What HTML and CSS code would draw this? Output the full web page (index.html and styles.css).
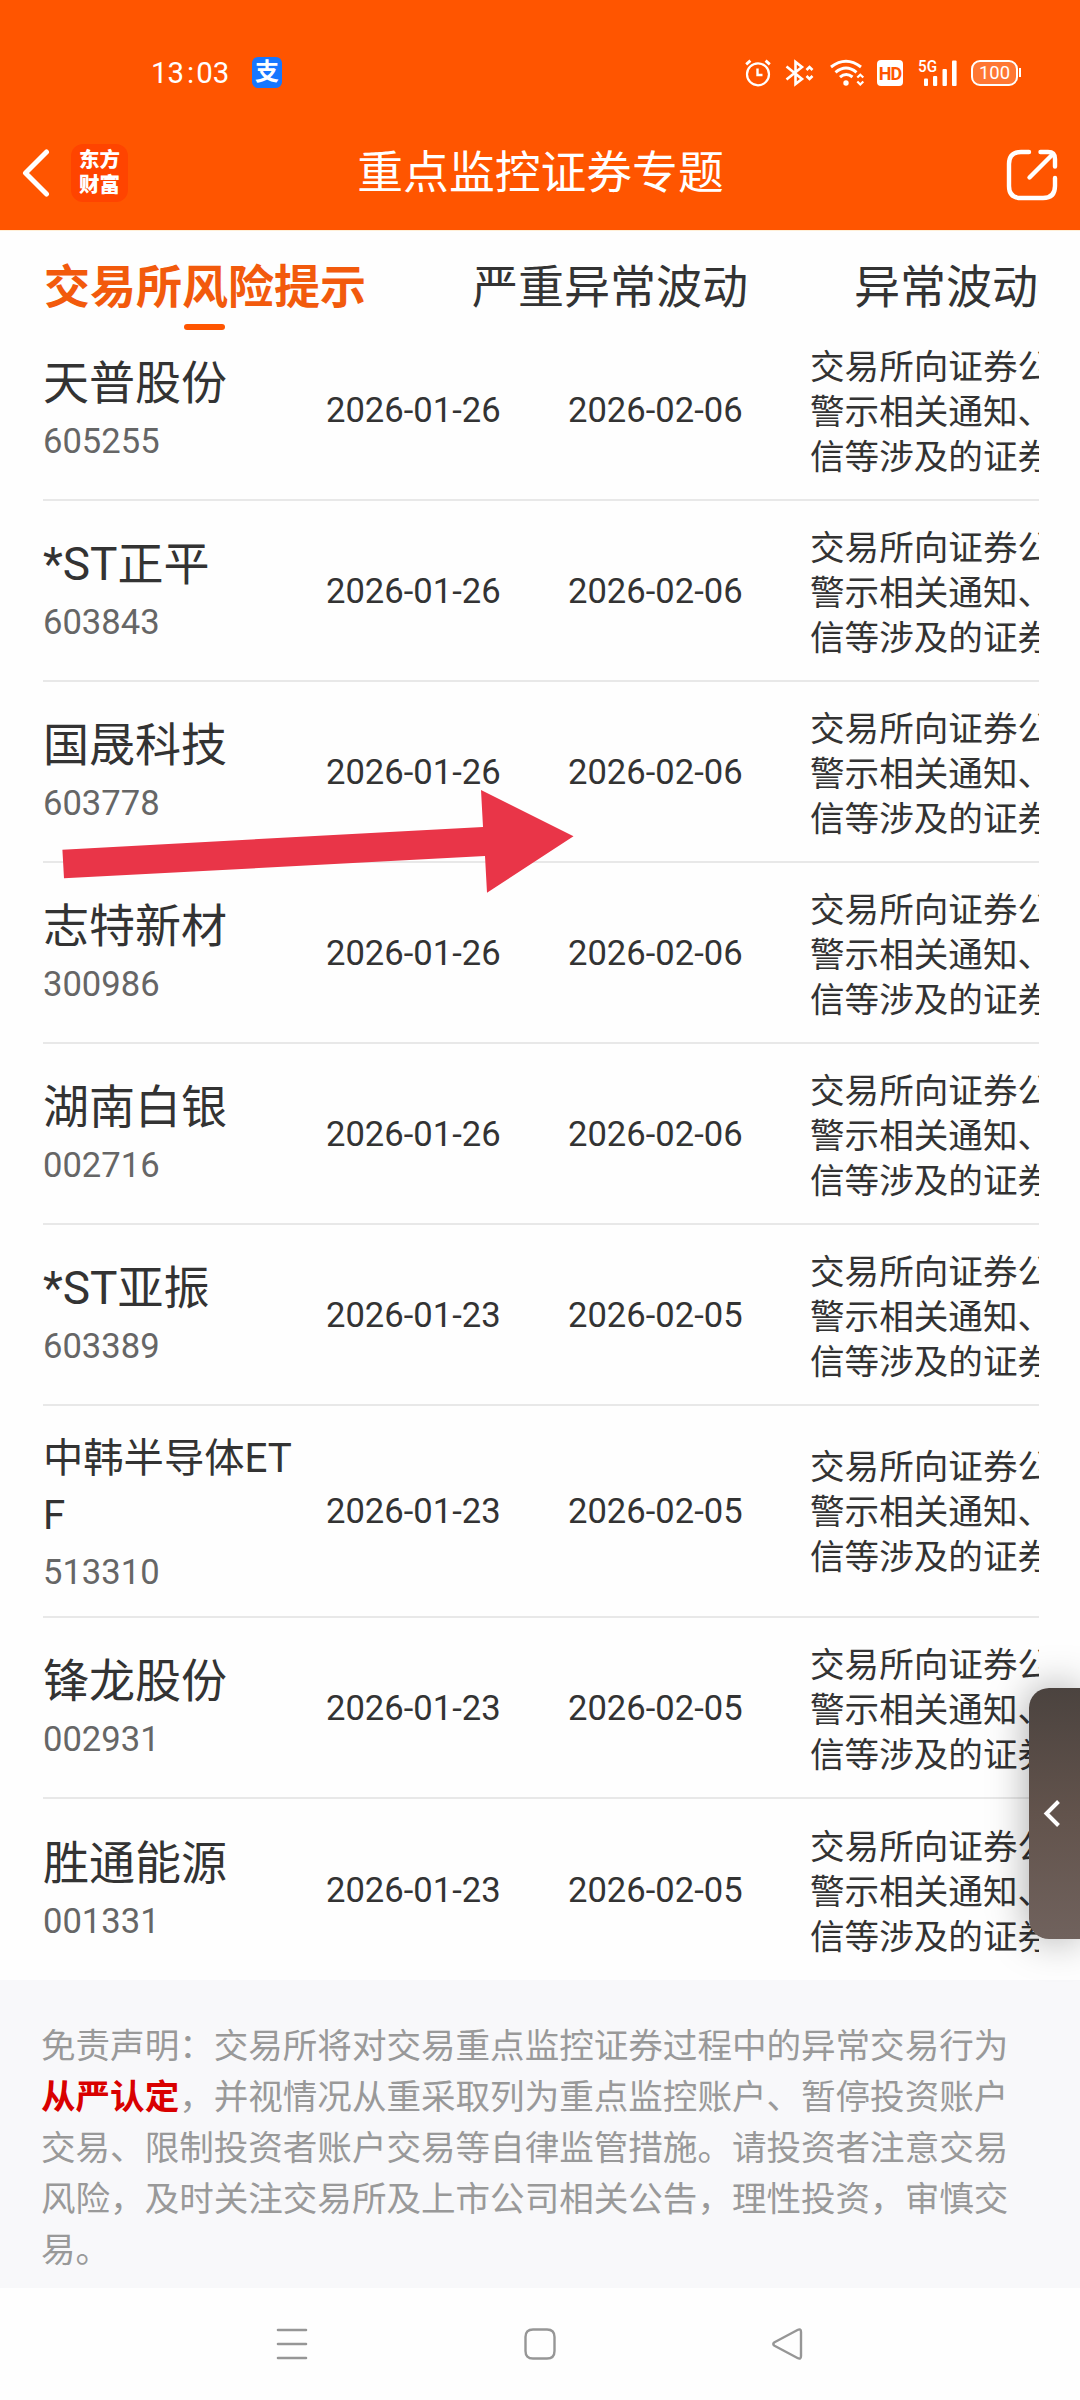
FILE: index.html
```html
<!DOCTYPE html>
<html lang="zh-CN">
<head>
    <meta charset="UTF-8">
    <meta name="viewport" content="width=device-width, initial-scale=1.0">
    <title>重点监控证券专题</title>
    <link rel="stylesheet" href="styles.css">
</head>
<body>
    <header class="top">
        <div class="status-bar">
            <span class="time">13<i class="colon">:</i>03</span>
            <span class="alipay">支</span>
            <div class="status-icons">
                <!-- Alarm -->
                <svg class="icon-alarm" width="26" height="28" viewBox="0 0 26 28" fill="none" stroke="#fff" stroke-width="2.2">
                    <circle cx="13" cy="15.3" r="11"/>
                    <path d="M12.5 9.5v6.5h5" stroke-width="2.4"/>
                    <path d="M1.2 5.4L5.4 1.6M24.8 5.4L20.6 1.6" stroke-width="2.8"/>
                </svg>
                <!-- Bluetooth -->
                <svg class="icon-bt" width="29" height="28" viewBox="0 0 29 28" fill="none" stroke="#fff" stroke-width="2.6">
                    <path d="M1.5 7.5L17 20L10.5 25V3L17 8L1.5 20.5"/>
                    <path d="M21.5 11L24.5 8L27.5 11M21.5 17L24.5 20L27.5 17"/>
                </svg>
                <!-- Wifi -->
                <svg class="icon-wifi" width="34" height="28" viewBox="0 0 34 28" fill="none" stroke="#fff" stroke-width="3">
                    <path d="M1 8Q16 -3.5 31 8"/>
                    <path d="M5.5 13.3Q16 4.8 26.5 13.3"/>
                    <path d="M10 18.2Q16 12.8 22.5 18"/>
                    <circle cx="16" cy="24" r="2.7" fill="#fff" stroke="none"/>
                    <path d="M27.3 18.5L30.3 15.7L33.3 18.5M27.3 22.5L30.3 25.5L33.3 22.5" stroke-width="2.2"/>
                </svg>
                <span class="hd">HD</span>
                <!-- 5G signal -->
                <svg class="icon-signal" width="38" height="28" viewBox="0 0 38 28" fill="#fff">
                    <text x="-1" y="13" class="net-label" textLength="19" lengthAdjust="spacingAndGlyphs">5G</text>
                    <rect x="5" y="19.5" width="4" height="7.5" rx="1"/>
                    <rect x="14" y="17" width="4.2" height="10" rx="1"/>
                    <rect x="23.5" y="10" width="4.4" height="17" rx="1"/>
                    <rect x="33" y="1.5" width="4.6" height="25.5" rx="1"/>
                </svg>
                <span class="battery">100</span>
            </div>
        </div>
        <div class="nav-bar">
            <svg class="back" width="28" height="48" viewBox="0 0 28 48" fill="none" stroke="#fff" stroke-width="5" stroke-linecap="round" stroke-linejoin="round">
                <path d="M24.5 3L3.5 24L24.5 45"/>
            </svg>
            <div class="logo">东方<br>财富</div>
            <h1>重点监控证券专题</h1>
            <svg class="share" width="52" height="52" viewBox="0 0 52 52" fill="none" stroke="#fff" stroke-width="4.4" stroke-linecap="round" stroke-linejoin="round">
                <path d="M23 3H15Q3 3 3 15V37Q3 49 15 49H37Q49 49 49 37V29"/>
                <path d="M34.5 3H42Q49 3 49 10V17.5"/>
                <path d="M23.5 28.5L46.5 5.5"/>
            </svg>
        </div>
    </header>

    <nav class="tabs">
        <a class="tab active">交易所风险提示</a>
        <a class="tab">严重异常波动</a>
        <a class="tab">异常波动</a>
    </nav>

    <main class="list">
        <div class="row">
            <div class="stock"><div class="name">天普股份</div><div class="code">605255</div></div>
            <div class="date">2026-01-26</div>
            <div class="date">2026-02-06</div>
            <div class="desc">交易所向证券公<br>警示相关通知、<br>信等涉及的证券</div>
        </div>
        <div class="row">
            <div class="stock"><div class="name">*ST正平</div><div class="code">603843</div></div>
            <div class="date">2026-01-26</div>
            <div class="date">2026-02-06</div>
            <div class="desc">交易所向证券公<br>警示相关通知、<br>信等涉及的证券</div>
        </div>
        <div class="row">
            <div class="stock"><div class="name">国晟科技</div><div class="code">603778</div></div>
            <div class="date">2026-01-26</div>
            <div class="date">2026-02-06</div>
            <div class="desc">交易所向证券公<br>警示相关通知、<br>信等涉及的证券</div>
        </div>
        <div class="row">
            <div class="stock"><div class="name">志特新材</div><div class="code">300986</div></div>
            <div class="date">2026-01-26</div>
            <div class="date">2026-02-06</div>
            <div class="desc">交易所向证券公<br>警示相关通知、<br>信等涉及的证券</div>
        </div>
        <div class="row">
            <div class="stock"><div class="name">湖南白银</div><div class="code">002716</div></div>
            <div class="date">2026-01-26</div>
            <div class="date">2026-02-06</div>
            <div class="desc">交易所向证券公<br>警示相关通知、<br>信等涉及的证券</div>
        </div>
        <div class="row">
            <div class="stock"><div class="name">*ST亚振</div><div class="code">603389</div></div>
            <div class="date">2026-01-23</div>
            <div class="date">2026-02-05</div>
            <div class="desc">交易所向证券公<br>警示相关通知、<br>信等涉及的证券</div>
        </div>
        <div class="row row-tall">
            <div class="stock"><div class="name name-long">中韩半导体ETF</div><div class="code">513310</div></div>
            <div class="date">2026-01-23</div>
            <div class="date">2026-02-05</div>
            <div class="desc">交易所向证券公<br>警示相关通知、<br>信等涉及的证券</div>
        </div>
        <div class="row">
            <div class="stock"><div class="name">锋龙股份</div><div class="code">002931</div></div>
            <div class="date">2026-01-23</div>
            <div class="date">2026-02-05</div>
            <div class="desc">交易所向证券公<br>警示相关通知、<br>信等涉及的证券</div>
        </div>
        <div class="row">
            <div class="stock"><div class="name">胜通能源</div><div class="code">001331</div></div>
            <div class="date">2026-01-23</div>
            <div class="date">2026-02-05</div>
            <div class="desc">交易所向证券公<br>警示相关通知、<br>信等涉及的证券</div>
        </div>
    </main>

    <footer class="disclaimer">
        <p>免责声明：交易所将对交易重点监控证券过程中的异常交易行为<b>从严认定</b>，并视情况从重采取列为重点监控账户、暂停投资账户交易、限制投资者账户交易等自律监管措施。请投资者注意交易风险，及时关注交易所及上市公司相关公告，理性投资，审慎交易。</p>
    </footer>

    <!-- System navigation -->
    <div class="system-nav">
        <svg width="32" height="32" viewBox="0 0 32 32" fill="none" stroke="#969696" stroke-width="2.6" stroke-linecap="round">
            <path d="M2 2H30M2 16H30M2 30H30"/>
        </svg>
        <svg width="32" height="32" viewBox="0 0 32 32" fill="none" stroke="#969696" stroke-width="2.4">
            <path d="M9 1.5H23Q30.5 1.5 30.5 9V23Q30.5 30.5 23 30.5H9Q1.5 30.5 1.5 23V9Q1.5 1.5 9 1.5Z"/>
        </svg>
        <svg width="32" height="32" viewBox="0 0 32 32" fill="none" stroke="#969696" stroke-width="2.4" stroke-linejoin="round">
            <path d="M26.5 2Q30 0.2 30 4V28Q30 31.8 26.5 30L3.5 17.8Q1 16 3.5 14.2Z"/>
        </svg>
    </div>

    <!-- Arrow drawn over the list -->
    <svg class="arrow" width="514" height="106" viewBox="0 0 514 106">
        <path d="M2.4 61.7L423 39L421 2L513.5 48.3L427 104.7L425 68L4 90.3Z" fill="#e93548"/>
    </svg>

    <div class="side-handle">
        <svg width="18" height="30" viewBox="0 0 18 30" fill="none" stroke="#fff" stroke-width="4">
            <path d="M15.5 2.5L3.5 14.5L15.5 26.5"/>
        </svg>
    </div>
</body>
</html>
```

FILE: styles.css
```css
* {
    box-sizing: border-box;
}
body {
    margin: 0;
    width: 1080px;
    height: 2400px;
    position: relative;
    overflow: hidden;
    font-family: Roboto, "Noto Sans CJK SC", sans-serif;
    background-color: #fefefe;
    color: #333;
}
svg {
    display: block;
    flex: none;
}

/* Header */
.top {
    height: 231px;
    background-color: #ff5500;
    border-bottom: 1px solid #fff0d8;
    color: #fff;
}
.status-bar {
    height: 116px;
    padding: 29px 58px 0 151px;
    display: flex;
    align-items: center;
}
.time {
    width: 101px;
    font-size: 29.4px;
    line-height: 32px;
    padding-top: 1px;
    white-space: nowrap;
}
.colon {
    font-style: normal;
    margin: 0 2px 0 3px;
}
.alipay {
    width: 30px;
    height: 31px;
    border-radius: 6px;
    background-color: #1677ff;
    font-size: 24px;
    font-weight: bold;
    line-height: 31px;
    text-align: center;
}
.status-icons {
    margin-left: auto;
    display: flex;
    align-items: center;
}
.icon-alarm {
    margin-right: 14px;
}
.icon-bt {
    margin-right: 16px;
}
.icon-wifi {
    margin-right: 13px;
    overflow: visible;
}
.hd {
    width: 26px;
    height: 26px;
    margin-right: 16px;
    border-radius: 4px;
    background-color: #fff;
    color: #ff5500;
    font-size: 18px;
    font-weight: bold;
    letter-spacing: -1px;
    line-height: 27px;
    text-align: center;
}
.icon-signal {
    margin-right: 14px;
    overflow: visible;
}
.net-label {
    font-size: 16px;
    font-weight: 500;
}
.battery {
    position: relative;
    width: 47px;
    height: 26px;
    margin-right: 4px;
    border: 2.5px solid #fff;
    border-radius: 9px;
    background-color: #ff7733;
    font-size: 18.5px;
    line-height: 23px;
    text-align: center;
}
.battery::after {
    content: "";
    position: absolute;
    right: -5px;
    top: 6px;
    width: 2px;
    height: 9px;
    background-color: #fff;
}
.nav-bar {
    height: 114px;
    padding: 0 22px 0 22px;
    display: grid;
    grid-template-columns: 49px 57px 1fr 105px;
    align-items: center;
}
.logo {
    width: 57px;
    height: 58px;
    padding-top: 4px;
    border-radius: 12px;
    background-color: #ff4400;
    font-size: 20.5px;
    font-weight: 900;
    line-height: 25px;
    text-align: center;
}
.nav-bar h1 {
    margin: 2px 0 0;
    font-size: 45.8px;
    font-weight: 400;
    line-height: 60px;
    text-align: center;
}
.share {
    justify-self: end;
    margin-top: 4px;
}

/* Tabs */
.tabs {
    height: 89px;
    padding: 24px 42px 0 44px;
    display: flex;
    justify-content: space-between;
}
.tab {
    position: relative;
    font-size: 46px;
    line-height: 64px;
}
.tab.active {
    color: #f25a0c;
    font-weight: bold;
}
.tab.active::after {
    content: "";
    position: absolute;
    left: 50%;
    bottom: -10px;
    width: 41px;
    height: 6px;
    margin-left: -21px;
    border-radius: 3px;
    background-color: #ff5500;
}

/* Stock list */
.list {
    margin: 0 41px 0 43px;
    height: 1660px;
}
.row {
    height: 181px;
    display: grid;
    grid-template-columns: 283px 242px 242px 1fr;
    align-items: center;
    border-bottom: 2px solid #e8e8e8;
}
.row-tall {
    height: 212px;
}
.row:last-child {
    border-bottom: none;
}
.stock {
    width: 260px;
    padding-top: 3px;
}
.name {
    font-size: 46px;
    line-height: 60px;
}
.name-long {
    font-size: 40.3px;
    line-height: 57px;
    word-break: break-all;
}
.row-tall .stock {
    padding-top: 7px;
}
.code {
    color: #666;
    font-size: 34.6px;
    line-height: 56px;
}
.date {
    font-size: 34.6px;
    line-height: 46px;
}
.desc {
    padding-top: 5px;
    overflow: hidden;
    font-size: 34.6px;
    line-height: 45px;
    white-space: nowrap;
}
.row-tall .desc {
    padding-top: 3px;
}

/* Disclaimer */
.disclaimer {
    height: 308px;
    padding: 41px 69px 0 41px;
    background-color: #f8f8fa;
    color: #999;
}
.disclaimer p {
    margin: 0;
    font-size: 34.56px;
    line-height: 51px;
    word-break: break-all;
}
.disclaimer b {
    color: #d90000;
}

.system-nav {
    height: 112px;
    padding: 0 277px 0 276px;
    display: flex;
    justify-content: space-between;
    align-items: center;
}

/* Overlays */
.arrow {
    position: absolute;
    left: 60px;
    top: 788px;
}
.side-handle {
    position: absolute;
    right: 0;
    top: 1688px;
    width: 51px;
    height: 251px;
    padding-left: 14px;
    display: flex;
    align-items: center;
    border-radius: 20px 0 0 20px;
    background: linear-gradient(#4b433f, #62534c 50%, #70625d);
    box-shadow: 0 0 40px rgba(0, 0, 0, 0.35);
}
```
